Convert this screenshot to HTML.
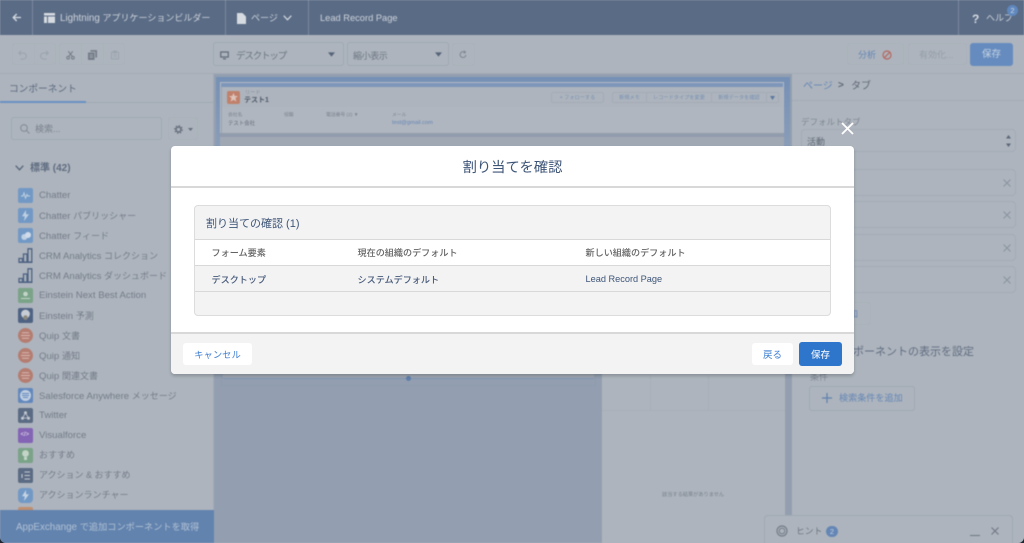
<!DOCTYPE html>
<html lang="ja">
<head>
<meta charset="utf-8">
<title>Lightning アプリケーションビルダー</title>
<style>
html,body{margin:0;padding:0}
body{width:1024px;height:543px;overflow:hidden;position:relative;background:#1e2530;font-family:"Liberation Sans","Noto Sans CJK JP",sans-serif;color:#6d7683}
#bg{position:absolute;left:0;top:0;width:1024px;height:543px;overflow:hidden;border-radius:0 0 6px 6px;background:#adb4bd}
#blur{position:absolute;left:0;top:0;width:1024px;height:543px;filter:blur(.55px)}
.a{position:absolute;white-space:nowrap;box-sizing:border-box}
.t{position:absolute;white-space:nowrap;line-height:1}
.btn{position:absolute;box-sizing:border-box;border:1px solid #a8b0ba;border-radius:3px}
svg{position:absolute;overflow:visible}
.lb{position:absolute;left:39px;font-size:9.600px;line-height:12px;color:#747c89;white-space:nowrap;margin-top:-1px}
.j{font-size:9px}
.ic{position:absolute;left:18px;width:15px;height:15px;border-radius:2px}
.rnd{border-radius:50%}
.inp{position:absolute;left:809px;width:207px;height:27px;border:1px solid #a3abb6;border-radius:4px;box-sizing:border-box}
.x{position:absolute;left:1003px;width:8px;height:8px}
.mb{position:absolute;box-sizing:border-box;border:1px solid #a4acb6;border-radius:2px;font-size:5.200px;line-height:10px;color:#7a92b4;text-align:center;top:92px;height:11px}
</style>
</head>
<body>
<div id="bg">
<div id="blur">
<!-- top bar -->
<div class="a" style="left:0;top:0;width:1024px;height:35px;background:#5a6b85"></div>
<div class="a" style="left:32px;top:0;width:1px;height:35px;background:#7a899e"></div>
<div class="a" style="left:225px;top:0;width:1px;height:35px;background:#7a899e"></div>
<div class="a" style="left:308px;top:0;width:1px;height:35px;background:#7a899e"></div>
<div class="a" style="left:958px;top:0;width:1px;height:35px;background:#7a899e"></div>
<svg style="left:12px;top:13px" width="9" height="9" viewBox="0 0 9 9"><path d="M9 4.500H1.500M4.700 1 1.200 4.500 4.700 8" fill="none" stroke="#d6dbe2" stroke-width="1.300"/></svg>
<svg style="left:44px;top:13px" width="11" height="10" viewBox="0 0 11 10"><path d="M0 0h11v2.500H0zM0 3.500h3V10H0zM4 3.500h7V10H4z" fill="#d6dbe2"/></svg>
<div class="t" style="left:60px;top:13.500px;font-size:9.800px;color:#cdd3db">Lightning <span style="font-size:9px">アプリケーションビルダー</span></div>
<svg style="left:237px;top:13px" width="9" height="11" viewBox="0 0 9 11"><path d="M0 0h5.500L9 3.500V11H0z" fill="#d6dbe2"/></svg>
<div class="t" style="left:251px;top:14px;font-size:9px;color:#cdd3db">ページ</div>
<svg style="left:283px;top:15px" width="9" height="6" viewBox="0 0 9 6"><path d="M.7.700 4.500 4.800 8.300.7" fill="none" stroke="#d6dbe2" stroke-width="1.200"/></svg>
<div class="t" style="left:320px;top:13.500px;font-size:9.300px;color:#cdd3db">Lead Record Page</div>
<div class="t" style="left:972px;top:13px;font-size:12px;font-weight:bold;color:#d6dbe2">?</div>
<div class="t" style="left:986px;top:14px;font-size:9px;color:#cdd3db">ヘルプ</div>
<div class="a" style="left:1007px;top:5px;width:11px;height:11px;border-radius:50%;background:#5f88bf;color:#d6dbe2;font-size:7.500px;line-height:12px;text-align:center">2</div>

<!-- toolbar -->
<div class="a" style="left:0;top:35px;width:1024px;height:39px;background:#adb4bd;border-bottom:1px solid #a3abb5"></div>
<div class="btn" style="left:12px;top:43px;width:44px;height:22px;border-color:#a9b0b9"></div>
<div class="a" style="left:34px;top:43px;width:1px;height:22px;background:#a9b0b9"></div>
<div class="btn" style="left:59px;top:43px;width:66px;height:22px;border-color:#a9b0b9"></div>
<div class="a" style="left:81px;top:43px;width:1px;height:22px;background:#a9b0b9"></div>
<div class="a" style="left:103px;top:43px;width:1px;height:22px;background:#a9b0b9"></div>
<svg style="left:18px;top:50px" width="9" height="10" viewBox="0 0 11 12"><path d="M3.500 1 1 3.500 3.500 6M1.500 3.500H6.500A3.500 3.500 0 0 1 6.500 11H3" fill="none" stroke="#9aa2ad" stroke-width="1.200"/></svg>
<svg style="left:40px;top:50px" width="9" height="10" viewBox="0 0 11 12"><path d="M7.500 1 10 3.500 7.500 6M9.500 3.500H4.500A3.500 3.500 0 0 0 4.500 11H8" fill="none" stroke="#9aa2ad" stroke-width="1.200"/></svg>
<svg style="left:66px;top:50px" width="9" height="10" viewBox="0 0 12 12"><path d="M3 1 8.500 8M9 1 3.500 8" stroke="#6f7783" stroke-width="1.300" fill="none"/><circle cx="2.800" cy="9.600" r="1.800" fill="none" stroke="#6f7783" stroke-width="1.200"/><circle cx="9.200" cy="9.600" r="1.800" fill="none" stroke="#6f7783" stroke-width="1.200"/></svg>
<svg style="left:88px;top:50px" width="9" height="10" viewBox="0 0 11 12"><path d="M3 0h8v9H9V2H3z" fill="#747c88"/><path d="M0 3h8v9H0z" fill="#747c88"/><path d="M2 6h4M2 8.500h4" stroke="#adb4bd"/></svg>
<svg style="left:111px;top:50px" width="8" height="10" viewBox="0 0 11 12"><path d="M.6 2h9.800v9.400H.6zM3.500 .6h4V3h-4z" fill="none" stroke="#98a0ab" stroke-width="1.100"/><path d="M3 6h5M3 8.500h5" stroke="#98a0ab"/></svg>

<div class="btn" style="left:213px;top:42px;width:131px;height:24px;border-color:#a0a8b3"></div>
<svg style="left:220px;top:51px" width="9" height="9" viewBox="0 0 12 11"><path d="M1 .8h10v6.700H1zM4 10h4" fill="none" stroke="#616b7a" stroke-width="1.600"/></svg>
<div class="t" style="left:236px;top:52px;font-size:9.500px;color:#6d7683;letter-spacing:-1.150px">デスクトップ</div>
<svg style="left:328px;top:52px" width="7" height="5" viewBox="0 0 10 7"><path d="M0 .5h10L5 6.500z" fill="#56647a"/></svg>
<div class="btn" style="left:347px;top:42px;width:102px;height:24px;border-color:#a0a8b3"></div>
<div class="t" style="left:353px;top:52px;font-size:9px;color:#6d7683;letter-spacing:-.4px">縮小表示</div>
<svg style="left:435px;top:52px" width="7" height="5" viewBox="0 0 10 7"><path d="M0 .5h10L5 6.500z" fill="#56647a"/></svg>
<div class="btn" style="left:452px;top:43px;width:23px;height:23px;border-color:#a9b0b9"></div>
<svg style="left:459px;top:50px" width="8" height="9" viewBox="0 0 11 11"><path d="M9.500 6A4 4 0 1 1 7.500 2.200M6.800 .3 9 2.300 6.500 4" fill="none" stroke="#7c8490" stroke-width="1.300"/></svg>

<div class="btn" style="left:847px;top:43px;width:57px;height:22px;border-color:#a9b0b9"></div>
<div class="t" style="left:858px;top:51px;font-size:9px;color:#6486b5">分析</div>
<svg style="left:882px;top:50px" width="10" height="10" viewBox="0 0 11 11"><circle cx="5.500" cy="5.500" r="4.400" fill="none" stroke="#b5675f" stroke-width="1.300"/><path d="M2.400 8.600 8.600 2.400" stroke="#b5675f" stroke-width="1.300"/></svg>
<div class="btn" style="left:908px;top:43px;width:59px;height:22px;border-color:#a9b0b9"></div>
<div class="t" style="left:919px;top:51px;font-size:9px;color:#959da8">有効化...</div>
<div class="a" style="left:970px;top:43px;width:43px;height:23px;background:#668cbf;border-radius:3px;color:#c6d3e3;font-size:9.500px;line-height:24px;text-align:center">保存</div>

<!-- left panel -->
<div class="a" style="left:0;top:74px;width:214px;height:469px;background:#adb4bd;border-right:1px solid #a3abb5"></div>
<div class="t" style="left:9px;top:85px;font-size:9.700px;color:#5c6a80">コンポーネント</div>
<div class="a" style="left:0;top:102px;width:214px;height:1px;background:#a0a8b3"></div>
<div class="a" style="left:0;top:101px;width:86px;height:2px;background:#6791c4"></div>
<div class="btn" style="left:11px;top:117px;width:151px;height:23px;border-color:#a0a8b3"></div>
<svg style="left:20px;top:124px" width="10" height="10" viewBox="0 0 10 10"><circle cx="4" cy="4" r="3.300" fill="none" stroke="#858d99" stroke-width="1.100"/><path d="M6.500 6.500 9.500 9.500" stroke="#858d99" stroke-width="1.100"/></svg>
<div class="t" style="left:35px;top:125px;font-size:9px;color:#79818d">検索...</div>
<div class="btn" style="left:168px;top:117px;width:30px;height:23px;border-color:#a9b0b9"></div>
<svg style="left:174px;top:125px" width="9" height="9" viewBox="0 0 11 11"><circle cx="5.500" cy="5.500" r="3" fill="none" stroke="#666f7d" stroke-width="1.800"/><circle cx="5.500" cy="5.500" r="4.600" fill="none" stroke="#666f7d" stroke-width="1.400" stroke-dasharray="1.800 1.800"/></svg>
<svg style="left:188px;top:128px" width="5" height="3" viewBox="0 0 5 3"><path d="M0 0h5L2.500 3z" fill="#666f7d"/></svg>
<svg style="left:15px;top:165px" width="9" height="6" viewBox="0 0 9 6"><path d="M.7.700 4.500 4.800 8.300.7" fill="none" stroke="#566479" stroke-width="1.300"/></svg>
<div class="t" style="left:30px;top:164px;font-size:10px;font-weight:bold;color:#5f6c81">標準 (42)</div>

<div class="ic" style="top:188px;background:#7299c5"></div>
<svg style="left:21px;top:192px" width="9" height="7" viewBox="0 0 9 7"><path d="M0 4h2l1-3 1.500 5L6 2.500 6.800 4H9" fill="none" stroke="#bfd0e3"/></svg>
<div class="lb" style="top:191px">Chatter</div>
<div class="ic" style="top:208px;background:#7299c5"></div>
<svg style="left:22px;top:210px" width="7" height="11" viewBox="0 0 7 11"><path d="M4 0 0 6.300h2.800L2 11 7 4.300H4z" fill="#bfd0e3"/></svg>
<div class="lb" style="top:211px">Chatter <span class="j">パブリッシャー</span></div>
<div class="ic" style="top:228px;background:#7299c5"></div>
<svg style="left:21px;top:232px" width="10" height="8" viewBox="0 0 10 8"><circle cx="3.300" cy="5" r="3" fill="#bfd0e3"/><circle cx="7" cy="3" r="3" fill="#d0dcea"/></svg>
<div class="lb" style="top:231px">Chatter <span class="j">フィード</span></div>
<svg style="left:18px;top:248px" width="15" height="15" viewBox="0 0 15 15"><path d="M1 10.500h3.500V14H1zM5.500 6h3.500v8H5.500zM10 .8h3.800V14H10zM.5 14.300h14" fill="none" stroke="#4e6283" stroke-width="1.300"/></svg>
<div class="lb" style="top:251px">CRM Analytics <span class="j">コレクション</span></div>
<svg style="left:18px;top:268px" width="15" height="15" viewBox="0 0 15 15"><path d="M1 10.500h3.500V14H1zM5.500 6h3.500v8H5.500zM10 .8h3.800V14H10zM.5 14.300h14" fill="none" stroke="#4e6283" stroke-width="1.300"/></svg>
<div class="lb" style="top:271px">CRM Analytics <span class="j">ダッシュボード</span></div>
<div class="ic" style="top:288px;background:#7aa388"></div>
<svg style="left:21px;top:291px" width="9" height="9" viewBox="0 0 9 9"><circle cx="4.500" cy="3" r="2.300" fill="#c4d5c8"/><path d="M0 7.500h9" stroke="#c4d5c8"/></svg>
<div class="lb" style="top:291px">Einstein Next Best Action</div>
<div class="ic" style="top:308px;background:#4e6283"></div>
<svg style="left:20px;top:309px" width="11" height="12" viewBox="0 0 11 12"><circle cx="5.500" cy="5" r="4.400" fill="#c7cdd4"/><circle cx="5.500" cy="8.600" r="2.300" fill="#8c8a7d"/></svg>
<div class="lb" style="top:311px">Einstein <span class="j">予測</span></div>
<div class="ic rnd" style="top:328px;background:#b57d71"></div>
<svg style="left:21px;top:332px" width="9" height="7" viewBox="0 0 9 7"><path d="M1 .8h7M0 3.500h9M1 6.200h7" stroke="#d7b8b0" stroke-width="1"/></svg>
<div class="lb" style="top:331px">Quip <span class="j">文書</span></div>
<div class="ic rnd" style="top:348px;background:#b57d71"></div>
<svg style="left:21px;top:352px" width="9" height="7" viewBox="0 0 9 7"><path d="M1 .8h7M0 3.500h9M1 6.200h7" stroke="#d7b8b0" stroke-width="1"/></svg>
<div class="lb" style="top:351px">Quip <span class="j">通知</span></div>
<div class="ic rnd" style="top:368px;background:#b57d71"></div>
<svg style="left:21px;top:372px" width="9" height="7" viewBox="0 0 9 7"><path d="M1 .8h7M0 3.500h9M1 6.200h7" stroke="#d7b8b0" stroke-width="1"/></svg>
<div class="lb" style="top:371px">Quip <span class="j">関連文書</span></div>
<div class="ic" style="top:388px;background:#6288bd"></div>
<div class="a" style="left:20px;top:390px;width:11px;height:11px;border-radius:50%;background:#c1cfe1"></div>
<svg style="left:22px;top:393px" width="7" height="5" viewBox="0 0 7 5"><path d="M0 .5h7M0 2.500h7M1 4.500h5" stroke="#6288bd"/></svg>
<div class="lb" style="top:391px">Salesforce Anywhere <span class="j">メッセージ</span></div>
<div class="ic" style="top:408px;background:#5b6b84"></div>
<svg style="left:21px;top:411px" width="9" height="9" viewBox="0 0 9 9"><circle cx="4.500" cy="1.800" r="1.500" fill="#c3c9d1"/><circle cx="1.500" cy="7.200" r="1.500" fill="#c3c9d1"/><circle cx="7.500" cy="7.200" r="1.500" fill="#c3c9d1"/><path d="M4.500 2 1.500 7h6z" fill="none" stroke="#c3c9d1" stroke-width=".8"/></svg>
<div class="lb" style="top:411px">Twitter</div>
<div class="ic" style="top:428px;background:#8464b5"></div>
<div class="t" style="left:20.500px;top:432px;font-size:6px;color:#d0c6e2;font-weight:bold">&lt;/&gt;</div>
<div class="lb" style="top:431px">Visualforce</div>
<div class="ic" style="top:448px;background:#7aa388"></div>
<svg style="left:22px;top:450px" width="7" height="11" viewBox="0 0 7 11"><circle cx="3.500" cy="3.500" r="3.400" fill="#c4d5c8"/><path d="M2 7h3v3H2z" fill="#c4d5c8"/></svg>
<div class="lb" style="top:450px"><span class="j">おすすめ</span></div>
<div class="ic" style="top:468px;background:#5b6b84"></div>
<svg style="left:21px;top:471px" width="9" height="9" viewBox="0 0 9 9"><path d="M3.500 1H9M3.500 4.500H9M3.500 8H9M1 3v4" stroke="#c3c9d1" stroke-width="1.100"/></svg>
<div class="lb" style="top:470px"><span class="j">アクション &amp; おすすめ</span></div>
<div class="ic" style="top:488px;background:#7299c5;border-radius:4px"></div>
<svg style="left:22px;top:490px" width="7" height="11" viewBox="0 0 7 11"><path d="M4 0 0 6.300h2.800L2 11 7 4.300H4z" fill="#c6d4e5"/></svg>
<div class="lb" style="top:490px"><span class="j">アクションランチャー</span></div>
<div class="ic" style="top:507px;background:#c18f6f"></div>
<div class="a" style="left:0;top:510px;width:214px;height:33px;background:#6283ae;color:#b1c1d5;font-size:9.800px;line-height:35px;padding-left:16px">AppExchange <span style="font-size:9.200px">で追加コンポーネントを取得</span></div>

<!-- canvas -->
<div class="a" style="left:214px;top:74px;width:578px;height:469px;background:#939fb0"></div>
<div class="a" style="left:216px;top:77px;width:574px;height:70px;background:linear-gradient(#7590b6,#8a9db8)"></div>
<div class="a" style="left:220px;top:82px;width:564px;height:55px;background:#96a1b2;border:1px solid #b2b9c3"></div>
<div class="a" style="left:221px;top:83px;width:562px;height:4px;background:#7e96ba"></div>
<div class="a" style="left:222px;top:87px;width:561px;height:20px;background:#adb4bd"></div>
<div class="a" style="left:222px;top:107px;width:561px;height:26px;background:#b0b6bf"></div>
<div class="a" style="left:227px;top:91px;width:13px;height:13px;border-radius:2px;background:#c0816c"></div>
<svg style="left:229px;top:93px" width="9" height="9" viewBox="0 0 9 9"><path d="M4.500 0 5.800 3H9L6.500 5 7.300 8.500 4.500 6.700 1.700 8.500 2.500 5 0 3H3.200z" fill="#ddc3ba"/></svg>
<div class="t" style="left:245px;top:90.500px;font-size:5.200px;color:#858d99">リード</div>
<div class="t" style="left:244px;top:97px;font-size:7px;font-weight:bold;color:#4f5a69">テスト1</div>
<div class="t" style="left:228px;top:114px;font-size:4.800px;color:#7b838f">会社名</div>
<div class="t" style="left:284px;top:114px;font-size:4.800px;color:#7b838f">役職</div>
<div class="t" style="left:326px;top:114px;font-size:4.800px;color:#7b838f">電話番号 (2) ▼</div>
<div class="t" style="left:392px;top:114px;font-size:4.800px;color:#7b838f">メール</div>
<div class="t" style="left:228px;top:122px;font-size:5.400px;color:#656e7c">テスト会社</div>
<div class="t" style="left:392px;top:121px;font-size:5.700px;color:#6486b5">test@gmail.com</div>
<div class="mb" style="left:551px;width:53px">+ フォローする</div>
<div class="mb" style="left:612px;width:35px">新規メモ</div>
<div class="mb" style="left:646px;width:66px">レコードタイプを変更</div>
<div class="mb" style="left:711px;width:56px">新規データを確認</div>
<div class="mb" style="left:766px;width:13px"></div>
<svg style="left:770px;top:96px" width="5" height="4" viewBox="0 0 5 4"><path d="M0 0h5L2.500 4z" fill="#5d789f"/></svg>
<div class="a" style="left:220px;top:133px;width:564px;height:4px;background:#919cac"></div>
<div class="a" style="left:220px;top:137px;width:564px;height:10px;background:#a0a8b4"></div>

<div class="a" style="left:221px;top:365px;width:375px;height:21px;border:1px solid #8c9bb0;background:#939fb0"></div>
<div class="a" style="left:223px;top:365px;width:371px;height:14px;background:#a0a7b2;border-bottom:1px solid #7f94b2"></div>
<div class="a" style="left:406px;top:376px;width:5px;height:5px;border-radius:50%;background:#5d7fab"></div>
<div class="a" style="left:602px;top:360px;width:183px;height:183px;background:#adb4bd"></div>
<div class="a" style="left:602px;top:410px;width:183px;height:1px;background:#a8afb9"></div>
<div class="a" style="left:650px;top:375px;width:1px;height:35px;background:#a8afb9"></div>
<div class="a" style="left:708px;top:375px;width:1px;height:35px;background:#a8afb9"></div>
<div class="t" style="left:662px;top:493px;font-size:5.200px;color:#7a828e">該当する結果がありません</div>

<!-- right panel -->
<div class="a" style="left:792px;top:74px;width:232px;height:469px;background:#adb4bd"></div>
<div class="a" style="left:792px;top:100px;width:232px;height:1px;background:#a3abb5"></div>
<div class="t" style="left:803px;top:82px;font-size:10px;color:#6486b5">ページ</div>
<div class="t" style="left:838px;top:81px;font-size:10px;font-weight:bold;color:#5f6876">&gt;</div>
<div class="t" style="left:851px;top:82px;font-size:10px;color:#5f6876">タブ</div>
<div class="t" style="left:801px;top:118px;font-size:8.500px;color:#7f8793">デフォルトタブ</div>
<div class="a" style="left:801px;top:129px;width:215px;height:23px;border:1px solid #a3abb6;border-radius:4px"></div>
<div class="t" style="left:807px;top:137.500px;font-size:9px;color:#5f6876">活動</div>
<svg style="left:1006px;top:135px" width="5" height="12" viewBox="0 0 5 12"><path d="M2.500 0 5 3.500H0zM0 8.500h5L2.500 12z" fill="#5c6879"/></svg>
<div class="inp" style="top:169px"></div><svg class="x" style="top:179px" viewBox="0 0 8 8"><path d="M.5.500l7 7M7.500.500l-7 7" stroke="#8a929e"/></svg>
<div class="inp" style="top:201px"></div><svg class="x" style="top:211px" viewBox="0 0 8 8"><path d="M.5.500l7 7M7.500.500l-7 7" stroke="#8a929e"/></svg>
<div class="inp" style="top:234px"></div><svg class="x" style="top:244px" viewBox="0 0 8 8"><path d="M.5.500l7 7M7.500.500l-7 7" stroke="#8a929e"/></svg>
<div class="inp" style="top:266px"></div><svg class="x" style="top:276px" viewBox="0 0 8 8"><path d="M.5.500l7 7M7.500.500l-7 7" stroke="#8a929e"/></svg>
<div class="btn" style="left:800px;top:302px;width:71px;height:23px;border-color:#a9b0b9"></div>
<div class="t" style="left:840px;top:310px;font-size:9px;color:#6486b5">追加</div>
<div class="t" style="left:831px;top:347px;font-size:11px;color:#5f6c81">コンポーネントの表示を設定</div>
<div class="t" style="left:810px;top:373px;font-size:9px;color:#7f8793">条件</div>
<div class="btn" style="left:809px;top:386px;width:106px;height:25px;border-color:#a0a8b3"></div>
<svg style="left:822px;top:393px" width="10" height="10" viewBox="0 0 11 11"><path d="M5.500 0v11M0 5.500h11" stroke="#5f80ac" stroke-width="1.300"/></svg>
<div class="t" style="left:839px;top:394px;font-size:9.100px;color:#6486b5">検索条件を追加</div>

<!-- hint -->
<div class="a" style="left:764px;top:515px;width:249px;height:28px;background:#adb4bd;border:1px solid #a0a8b3;border-bottom:0;border-radius:4px 4px 0 0"></div>
<svg style="left:776px;top:525px" width="12" height="12" viewBox="0 0 12 12"><circle cx="6" cy="6" r="5" fill="none" stroke="#747c88" stroke-width="1.200"/><circle cx="6" cy="6" r="2.800" fill="none" stroke="#747c88"/></svg>
<div class="t" style="left:796px;top:527px;font-size:8.800px;color:#6d7683">ヒント</div>
<div class="a" style="left:826px;top:526px;width:12px;height:11px;border-radius:6px;background:#6486b5;color:#c6d3e3;font-size:7.500px;line-height:12px;text-align:center">2</div>
<div class="a" style="left:970px;top:535px;width:10px;height:1px;background:#6d7683"></div>
<svg style="left:991px;top:527px" width="8" height="8" viewBox="0 0 8 8"><path d="M.5.500l7 7M7.500.500l-7 7" stroke="#6d7683"/></svg>
</div>

<!-- close -->
<svg style="left:841px;top:122px" width="13" height="13" viewBox="0 0 13 13"><path d="M1 1 12 12M12 1 1 12" stroke="#fff" stroke-width="1.800"/></svg>

<!-- modal -->
<div class="a" style="left:171px;top:146px;width:683px;height:228px;background:#fff;border-radius:4px;box-shadow:0 2px 3px rgba(0,0,0,.2);overflow:hidden;filter:blur(.25px)">
  <div class="t" style="left:0;width:683px;top:14.500px;text-align:center;font-size:14.300px;color:#3e5578">割り当てを確認</div>
  <div class="a" style="left:0;top:40px;width:683px;height:2px;background:#d8d8d8"></div>
  <div class="a" style="left:22.500px;top:59px;width:637.500px;height:111px;background:#f3f3f3;border:1px solid #dcdcdc;border-radius:4px;overflow:hidden">
    <div class="t" style="left:11.500px;top:12.500px;font-size:11px;color:#3e5578">割り当ての確認 (1)</div>
    <div class="a" style="left:0;top:33px;width:637px;height:27px;background:#fff;border-top:1px solid #d8d8d8;border-bottom:1px solid #d8d8d8"></div>
    <div class="a" style="left:0;top:85px;width:637px;height:1px;background:#d8d8d8"></div>
    <div class="t" style="left:17px;top:43px;font-size:9.100px;font-weight:500;color:#636363">フォーム要素</div>
    <div class="t" style="left:163px;top:43px;font-size:9.100px;font-weight:500;color:#636363">現在の組織のデフォルト</div>
    <div class="t" style="left:391px;top:43px;font-size:9.100px;font-weight:500;color:#636363">新しい組織のデフォルト</div>
    <div class="t" style="left:17px;top:69.500px;font-size:9.100px;font-weight:500;color:#46597a">デスクトップ</div>
    <div class="t" style="left:163px;top:69.500px;font-size:9.100px;font-weight:500;color:#46597a">システムデフォルト</div>
    <div class="t" style="left:391px;top:69px;font-size:9.200px;color:#3e5578">Lead Record Page</div>
  </div>
  <div class="a" style="left:0;top:186px;width:683px;height:42px;background:#f3f3f3;border-top:2px solid #d8d8d8"></div>
  <div class="a" style="left:12px;top:197px;width:69px;height:22px;background:#fff;border-radius:3px;color:#3f7fd2;font-size:9.300px;line-height:25px;text-align:center">キャンセル</div>
  <div class="a" style="left:581px;top:197px;width:41px;height:22px;background:#fff;border-radius:3px;color:#3f7fd2;font-size:9.500px;line-height:25px;text-align:center">戻る</div>
  <div class="a" style="left:628px;top:196px;width:43px;height:24px;background:#2e75cc;border-radius:3px;color:#e8f0fa;font-size:9.500px;line-height:27px;text-align:center;font-weight:500">保存</div>
</div>
</div>
</body>
</html>
